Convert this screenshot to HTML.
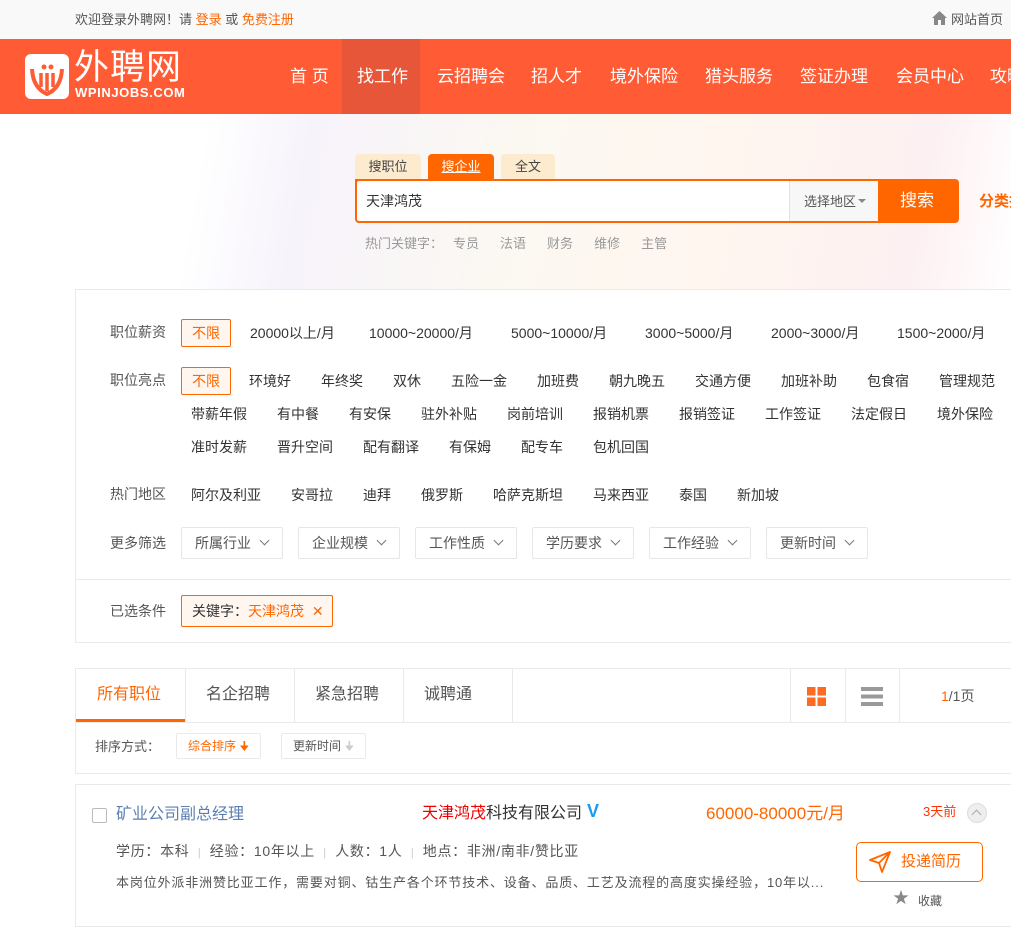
<!DOCTYPE html>
<html><head><meta charset="utf-8">
<style>
*{margin:0;padding:0;box-sizing:border-box}
body{width:1011px;height:927px;overflow:hidden;position:relative;background:#fff;font-family:"Liberation Sans","Noto Sans CJK SC",sans-serif;font-size:14px;color:#333}
.a{position:absolute;white-space:nowrap;line-height:16px}
.top{position:absolute;left:0;top:0;width:1011px;height:39px;background:#f9f9f9}
.hd{position:absolute;left:0;top:39px;width:1011px;height:75px;background:#ff5c35}
.nav{position:absolute;top:39px;height:75px;line-height:75px;color:#fff;font-size:17px;white-space:nowrap}
.bg{position:absolute;left:0;top:114px;width:1011px;height:176px;background:linear-gradient(100deg,#fff 0%,#fff 20%,#f7f3fb 30%,#fbf8f2 50%,#fff6ef 70%,#fdf0f2 90%,#fff 100%)}
.tag{position:absolute;border:1px solid #ff6600;background:#fff6f0;color:#ff6600;border-radius:2px;text-align:center}
.dd{position:absolute;top:527px;width:102px;height:32px;border:1px solid #e6e6e6;border-radius:2px;color:#555;line-height:30px;padding-left:13px}
.dd:after{content:"";position:absolute;right:14px;top:9px;width:6px;height:6px;border-right:1.5px solid #777;border-bottom:1.5px solid #777;transform:rotate(45deg)}
.lab{color:#555}
.g{color:#ccc;font-size:11px}
</style></head><body>
<div class="top"></div>
<div class="a" style="left:75px;top:12px;font-size:13px;color:#555">欢迎登录外聘网！请 <span style="color:#ff6600">登录</span> 或 <span style="color:#ff6600">免费注册</span></div>
<svg style="position:absolute;left:932px;top:11px" width="15" height="14" viewBox="0 0 15 14"><path d="M7.5 0L0 7h2v7h4V9h3v5h4V7h2z" fill="#888"/></svg>
<div class="a" style="left:951px;top:12px;font-size:13px;color:#555">网站首页</div>
<div class="hd"></div>
<div style="position:absolute;left:342px;top:39px;width:78px;height:75px;background:#e8563a"></div>
<div style="position:absolute;left:25px;top:54px;width:44px;height:45px;background:#fff;border-radius:6px"></div>
<svg style="position:absolute;left:25px;top:54px" width="44" height="45" viewBox="0 0 44 45"><path d="M7 15 Q8 34 22 40 Q36 34 37 15" fill="none" stroke="#ff5c35" stroke-width="4"/><path d="M16 19v14M22 19v18M28 19v14" stroke="#ff5c35" stroke-width="3.5"/><circle cx="19" cy="13" r="2.5" fill="#ff5c35"/><circle cx="26" cy="13" r="2.5" fill="#ff5c35"/></svg>
<div class="a" style="left:74px;top:50px;font-size:35px;line-height:36px;color:#fff;letter-spacing:1px">外聘网</div>
<div class="a" style="left:75px;top:86px;font-size:13px;line-height:13px;color:#fff;letter-spacing:0.6px;font-weight:bold">WPINJOBS.COM</div>
<div class="nav" style="left:290px">首 页</div>
<div class="nav" style="left:357px">找工作</div>
<div class="nav" style="left:437px">云招聘会</div>
<div class="nav" style="left:531px">招人才</div>
<div class="nav" style="left:610px">境外保险</div>
<div class="nav" style="left:705px">猎头服务</div>
<div class="nav" style="left:800px">签证办理</div>
<div class="nav" style="left:896px">会员中心</div>
<div class="nav" style="left:990px">攻略</div>
<div class="bg"></div>
<div style="position:absolute;left:355px;top:154px;width:66px;height:26px;background:#fdebd0;border-radius:4px 4px 0 0;text-align:center;line-height:26px;font-size:13px;color:#444">搜职位</div>
<div style="position:absolute;left:428px;top:154px;width:66px;height:26px;background:#ff6600;border-radius:4px 4px 0 0;text-align:center;line-height:26px;font-size:13px;color:#fff;text-decoration:underline">搜企业</div>
<div style="position:absolute;left:501px;top:154px;width:54px;height:26px;background:#fdebd0;border-radius:4px 4px 0 0;text-align:center;line-height:26px;font-size:13px;color:#444">全文</div>
<div style="position:absolute;left:355px;top:179px;width:604px;height:44px;background:#ff6600;border-radius:0 4px 4px 4px"></div>
<div style="position:absolute;left:357px;top:181px;width:432px;height:40px;background:#fff;border-radius:2px 0 0 2px"></div>
<div style="position:absolute;left:789px;top:181px;width:89px;height:40px;background:#f7f7f7;border-left:1px solid #e3e3e3"></div>
<div class="a" style="left:366px;top:193px;font-size:14px;color:#333">天津鸿茂</div>
<div class="a" style="left:804px;top:194px;font-size:13px;color:#555">选择地区</div>
<div style="position:absolute;left:858px;top:199px;border:4px solid transparent;border-top:4px solid #888"></div>
<div class="a" style="left:900px;top:191px;font-size:17px;line-height:20px;color:#fff">搜索</div>
<div class="a" style="left:979px;top:194px;font-size:15px;color:#ff6600;font-weight:bold">分类搜</div>
<div class="a" style="left:365px;top:236px;font-size:13px;color:#999">热门关键字：<span style="margin-left:10px">专员</span><span style="margin-left:21px">法语</span><span style="margin-left:21px">财务</span><span style="margin-left:21px">维修</span><span style="margin-left:21px">主管</span></div>

<div style="position:absolute;left:75px;top:289px;width:950px;height:354px;border:1px solid #eaeaea;background:#fff"></div>
<div style="position:absolute;left:76px;top:579px;width:935px;height:1px;background:#eaeaea"></div>
<div class="a lab" style="left:110px;top:324px">职位薪资</div>
<div class="tag" style="left:181px;top:319px;width:50px;height:28px;line-height:26px">不限</div>
<div class="a" style="left:250px;top:325px">20000以上/月</div>
<div class="a" style="left:369px;top:325px">10000~20000/月</div>
<div class="a" style="left:511px;top:325px">5000~10000/月</div>
<div class="a" style="left:645px;top:325px">3000~5000/月</div>
<div class="a" style="left:771px;top:325px">2000~3000/月</div>
<div class="a" style="left:897px;top:325px">1500~2000/月</div>
<div class="a lab" style="left:110px;top:372px">职位亮点</div>
<div class="tag" style="left:181px;top:367px;width:50px;height:28px;line-height:26px">不限</div>
<div class="a" style="left:249px;top:373px">环境好</div><div class="a" style="left:321px;top:373px">年终奖</div><div class="a" style="left:393px;top:373px">双休</div><div class="a" style="left:451px;top:373px">五险一金</div><div class="a" style="left:537px;top:373px">加班费</div><div class="a" style="left:609px;top:373px">朝九晚五</div><div class="a" style="left:695px;top:373px">交通方便</div><div class="a" style="left:781px;top:373px">加班补助</div><div class="a" style="left:867px;top:373px">包食宿</div><div class="a" style="left:939px;top:373px">管理规范</div>
<div class="a" style="left:191px;top:406px">带薪年假</div><div class="a" style="left:277px;top:406px">有中餐</div><div class="a" style="left:349px;top:406px">有安保</div><div class="a" style="left:421px;top:406px">驻外补贴</div><div class="a" style="left:507px;top:406px">岗前培训</div><div class="a" style="left:593px;top:406px">报销机票</div><div class="a" style="left:679px;top:406px">报销签证</div><div class="a" style="left:765px;top:406px">工作签证</div><div class="a" style="left:851px;top:406px">法定假日</div><div class="a" style="left:937px;top:406px">境外保险</div>
<div class="a" style="left:191px;top:439px">准时发薪</div><div class="a" style="left:277px;top:439px">晋升空间</div><div class="a" style="left:363px;top:439px">配有翻译</div><div class="a" style="left:449px;top:439px">有保姆</div><div class="a" style="left:521px;top:439px">配专车</div><div class="a" style="left:593px;top:439px">包机回国</div>
<div class="a lab" style="left:110px;top:486px">热门地区</div>
<div class="a" style="left:191px;top:487px">阿尔及利亚</div><div class="a" style="left:291px;top:487px">安哥拉</div><div class="a" style="left:363px;top:487px">迪拜</div><div class="a" style="left:421px;top:487px">俄罗斯</div><div class="a" style="left:493px;top:487px">哈萨克斯坦</div><div class="a" style="left:593px;top:487px">马来西亚</div><div class="a" style="left:679px;top:487px">泰国</div><div class="a" style="left:737px;top:487px">新加坡</div>
<div class="a lab" style="left:110px;top:535px">更多筛选</div>
<div class="dd" style="left:181px">所属行业</div><div class="dd" style="left:298px">企业规模</div><div class="dd" style="left:415px">工作性质</div><div class="dd" style="left:532px">学历要求</div><div class="dd" style="left:649px">工作经验</div><div class="dd" style="left:766px">更新时间</div>
<div class="a lab" style="left:110px;top:603px">已选条件</div>
<div class="tag" style="left:181px;top:595px;width:152px;height:32px;line-height:30px;text-align:left;padding-left:10px"><span style="color:#333">关键字：</span>天津鸿茂 <span style="margin-left:4px">✕</span></div>

<div style="position:absolute;left:75px;top:668px;width:950px;height:106px;border:1px solid #eaeaea"></div>
<div style="position:absolute;left:76px;top:722px;width:935px;height:1px;background:#eaeaea"></div>
<div style="position:absolute;left:76px;top:719px;width:109px;height:3px;background:#ff6600"></div>
<div style="position:absolute;left:185px;top:669px;width:1px;height:53px;background:#eaeaea"></div>
<div style="position:absolute;left:294px;top:669px;width:1px;height:53px;background:#eaeaea"></div>
<div style="position:absolute;left:403px;top:669px;width:1px;height:53px;background:#eaeaea"></div>
<div style="position:absolute;left:512px;top:669px;width:1px;height:53px;background:#eaeaea"></div>
<div style="position:absolute;left:790px;top:669px;width:1px;height:53px;background:#eaeaea"></div>
<div style="position:absolute;left:845px;top:669px;width:1px;height:53px;background:#eaeaea"></div>
<div style="position:absolute;left:899px;top:669px;width:1px;height:53px;background:#eaeaea"></div>
<div class="a" style="left:97px;top:687px;font-size:16px;color:#ff6600">所有职位</div>
<div class="a" style="left:206px;top:687px;font-size:16px;color:#555">名企招聘</div>
<div class="a" style="left:315px;top:687px;font-size:16px;color:#555">紧急招聘</div>
<div class="a" style="left:424px;top:687px;font-size:16px;color:#555">诚聘通</div>
<svg style="position:absolute;left:807px;top:687px" width="19" height="19"><rect x="0" y="0" width="8.5" height="8.5" fill="#ff6a22"/><rect x="10.5" y="0" width="8.5" height="8.5" fill="#ff6a22"/><rect x="0" y="10.5" width="8.5" height="8.5" fill="#ff6a22"/><rect x="10.5" y="10.5" width="8.5" height="8.5" fill="#ff6a22"/></svg>
<svg style="position:absolute;left:861px;top:687px" width="22" height="19"><rect y="0" width="22" height="4" fill="#999"/><rect y="7.5" width="22" height="4" fill="#999"/><rect y="15" width="22" height="4" fill="#999"/></svg>
<div class="a" style="left:941px;top:688px;font-size:14px;color:#555"><span style="color:#ff6600">1</span>/1页</div>
<div class="a" style="left:95px;top:739px;font-size:13px;color:#555">排序方式：</div>
<div style="position:absolute;left:176px;top:733px;width:85px;height:26px;border:1px solid #eaeaea;border-radius:2px;font-size:12px;color:#ff6600;line-height:24px;padding-left:11px">综合排序 <span>🠋</span></div>
<div style="position:absolute;left:281px;top:733px;width:85px;height:26px;border:1px solid #eaeaea;border-radius:2px;font-size:12px;color:#555;line-height:24px;padding-left:11px">更新时间 <span style="color:#ccc">🠋</span></div>

<div style="position:absolute;left:75px;top:784px;width:950px;height:143px;border:1px solid #eaeaea"></div>
<div style="position:absolute;left:92px;top:808px;width:15px;height:15px;border:1px solid #bbb;border-radius:2px"></div>
<div class="a" style="left:116px;top:806px;font-size:16px;line-height:18px;color:#5b7fb3">矿业公司副总经理</div>
<div class="a" style="left:422px;top:805px;font-size:16px;line-height:18px;color:#333"><span style="color:#e00">天津鸿茂</span>科技有限公司</div>
<div class="a" style="left:587px;top:801px;font-size:18px;line-height:20px;color:#1a9bf0;font-weight:bold">V</div>
<div class="a" style="left:706px;top:805px;font-size:17px;line-height:18px;color:#ff6600">60000-80000元/月</div>
<div class="a" style="left:923px;top:804px;font-size:13px;color:#ff3300">3天前</div>
<div style="position:absolute;left:967px;top:803px;width:20px;height:20px;border-radius:50%;background:#eee;border:1px solid #ddd"></div>
<div style="position:absolute;left:973px;top:811px;width:7px;height:7px;border-left:1.5px solid #aaa;border-top:1.5px solid #aaa;transform:rotate(45deg)"></div>
<div class="a" style="left:116px;top:843px;font-size:14px;color:#555;letter-spacing:0.7px">学历：本科 <span class="g">&nbsp;|&nbsp;</span> 经验：10年以上 <span class="g">&nbsp;|&nbsp;</span> 人数：1人 <span class="g">&nbsp;|&nbsp;</span> 地点：非洲/南非/赞比亚</div>
<div class="a" style="left:116px;top:875px;font-size:13px;color:#555;letter-spacing:0.85px">本岗位外派非洲赞比亚工作，需要对铜、钴生产各个环节技术、设备、品质、工艺及流程的高度实操经验，10年以...</div>
<div style="position:absolute;left:856px;top:842px;width:127px;height:40px;border:1px solid #ff6600;border-radius:5px"></div>
<svg style="position:absolute;left:868px;top:850px" width="24" height="24" viewBox="0 0 24 24"><path d="M2 10L22 2L14 22L11 13Z M11 13L22 2" fill="none" stroke="#ff6600" stroke-width="1.8" stroke-linejoin="round"/></svg>
<div class="a" style="left:901px;top:853px;font-size:15px;line-height:18px;color:#ff6600">投递简历</div>
<div class="a" style="left:893px;top:891px;font-size:16px;color:#888">★</div>
<div class="a" style="left:918px;top:893px;font-size:12px;color:#555">收藏</div>
</body></html>
